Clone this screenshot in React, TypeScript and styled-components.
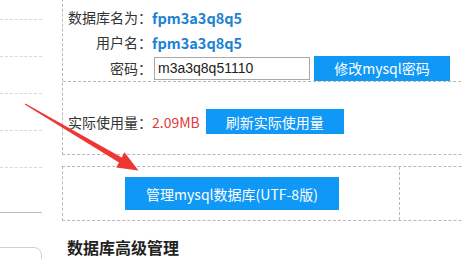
import React from "react";
import styled, { createGlobalStyle } from "styled-components";

const Global = createGlobalStyle`
  html, body { margin: 0; padding: 0; background: #fff; overflow: hidden; }
  body { font-family: "Noto Sans CJK SC", "Microsoft YaHei", sans-serif; color: #333; }
  #root { width: 463px; height: 259px; overflow: hidden; position: relative; }
`;

const Page = styled.div`
  display: flex;
  align-items: flex-start;
  width: 600px;
`;

const Sidebar = styled.div`
  width: 42px;
  flex: none;
  display: flex;
  flex-direction: column;
  margin-top: -17px;
`;

const SideItem = styled.div`
  height: 37px;
  box-sizing: border-box;
  border-bottom: 1px dashed #d8d8d8;
`;

const SideBlock = styled.div`
  height: 45px;
  box-sizing: border-box;
  border-bottom: 1px solid #bdbdbd;
`;

const SideCard = styled.div`
  margin-top: 34px;
  margin-left: -12px;
  width: 54px;
  height: 40px;
  box-sizing: border-box;
  border: 1px solid #cfcfcf;
  border-radius: 8px;
`;

const Main = styled.div`
  margin-left: 20px;
  width: 520px;
  flex: none;
  display: flex;
  flex-direction: column;
`;

const Box = styled.div`
  border: 1px dashed #b8b8b8;
  margin-top: -11px;
`;

const InfoSection = styled.div`
  display: grid;
  grid-template-columns: 89px auto;
  grid-template-rows: 25px 25px 26px;
  align-items: center;
  padding-top: 15px;
  border-bottom: 1px dashed #b8b8b8;
  font-size: 14px;
`;

const Label = styled.div`
  text-align: right;
  color: #333;
  white-space: nowrap;
  line-height: 25px;
`;

const Value = styled.div`
  color: #1e82d2;
  font-weight: bold;
  font-size: 14.5px;
  line-height: 25px;
`;

const Controls = styled.div`
  display: flex;
  align-items: center;
  gap: 4px;
`;

const Input = styled.input`
  width: 156px;
  height: 23px;
  box-sizing: border-box;
  margin: 0 0 0 2px;
  padding: 0 0 0 3px;
  border: 1px solid #a9a9a9;
  font-family: "Liberation Sans", Arial, sans-serif;
  font-size: 14px;
  color: #222;
  outline: none;
`;

const Button = styled.button<{ $w: number; $h: number }>`
  width: ${(p) => p.$w}px;
  height: ${(p) => p.$h}px;
  border: none;
  padding: 0;
  background: #0f98f6;
  color: #fff;
  font-family: "Noto Sans CJK SC", "Microsoft YaHei", sans-serif;
  font-size: 14px;
  white-space: nowrap;
  flex: none;
`;

const UsageSection = styled.div`
  display: flex;
  align-items: center;
  height: 25px;
  padding: 27px 0 20px 5px;
  font-size: 14px;
`;

const Usage = styled.span`
  color: #e4393c;
  margin-right: 6px;
`;

const Box2 = styled.div`
  margin-top: 11px;
  border: 1px dashed #b8b8b8;
  display: flex;
  height: 53px;
`;

const Cell = styled.div`
  width: 334px;
  border-right: 1px dashed #b8b8b8;
  display: flex;
  align-items: center;
  justify-content: center;
  padding-left: 2px;
`;

const Heading = styled.h2`
  margin: 14px 0 0 5px;
  font-size: 16px;
  line-height: 24px;
  font-weight: bold;
  color: #222;
`;

const Overlay = styled.svg`
  position: absolute;
  left: 0;
  top: 0;
  width: 463px;
  height: 259px;
  pointer-events: none;
`;

export default function App() {
  return (
    <>
      <Global />
      <Page>
        <Sidebar>
          <SideItem />
          <SideItem />
          <SideItem />
          <SideItem />
          <SideItem />
          <SideBlock />
          <SideCard />
        </Sidebar>
        <Main>
          <Box>
            <InfoSection>
              <Label>数据库名为：</Label>
              <Value>fpm3a3q8q5</Value>
              <Label>用户名：</Label>
              <Value>fpm3a3q8q5</Value>
              <Label>密码：</Label>
              <Controls>
                <Input defaultValue="m3a3q8q51110" />
                <Button $w={136} $h={25}>修改mysql密码</Button>
              </Controls>
            </InfoSection>
            <UsageSection>
              <span>实际使用量：</span>
              <Usage>2.09MB</Usage>
              <Button $w={138} $h={25}>刷新实际使用量</Button>
            </UsageSection>
          </Box>
          <Box2>
            <Cell>
              <Button $w={214} $h={33}>管理mysql数据库(UTF-8版)</Button>
            </Cell>
          </Box2>
          <Heading>数据库高级管理</Heading>
        </Main>
      </Page>
      <Overlay viewBox="0 0 463 259">
        <polygon
          points="25.3,103.5 121.8,157.4 124.4,152.2 138.5,170.5 116.2,167.4 119,162.4 24.7,104.5"
          fill="#ee3633"
        />
      </Overlay>
    </>
  );
}
